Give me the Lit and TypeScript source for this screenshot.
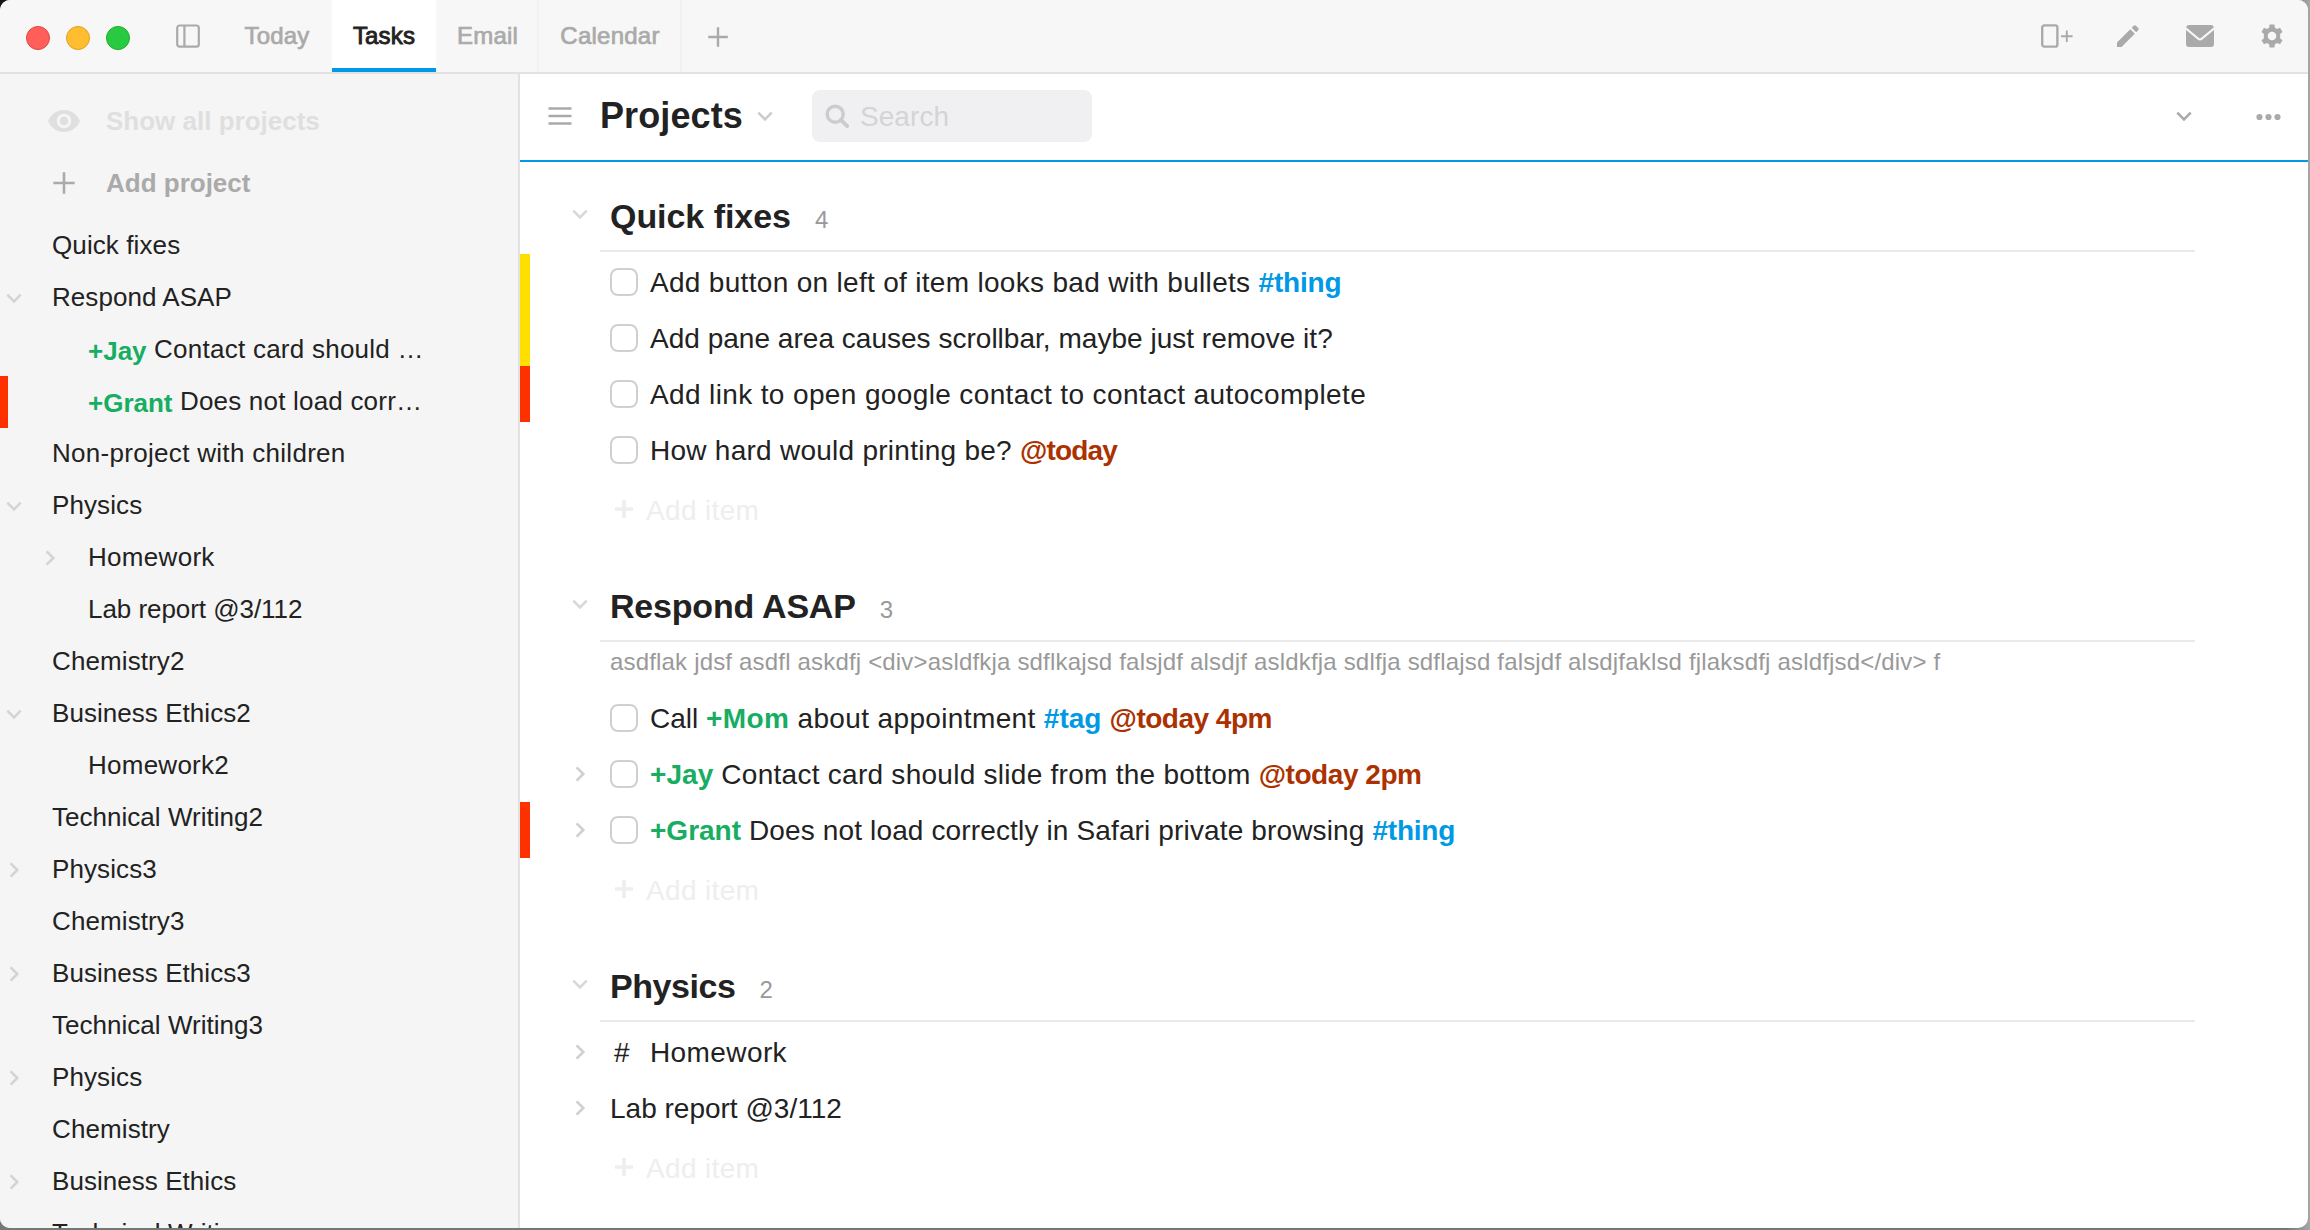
import { LitElement, html, css, svg, nothing, type TemplateResult } from "lit";
import { customElement, property } from "lit/decorators.js";
import { classMap } from "lit/directives/class-map.js";

type Fold = "open" | "closed" | "none";
type Mark = "yellow" | "red" | "none";
type Kind = "plain" | "person" | "tag" | "due";
// kind, text, tracking in px
type Span = [Kind, string, number];

interface NavRow {
  spans: Span[];
  fold?: Fold;
  nested?: boolean;
  mark?: Mark;
}

interface Item {
  spans: Span[];
  fold?: Fold;
  mark?: Mark;
  lead: "box" | "hash" | "none";
}

interface Section {
  title: string;
  tracking: number;
  count: number;
  note?: string;
  items: Item[];
}

const plain = (text: string, tracking = 0.1): Span[] => [["plain", text, tracking]];

const NAV: NavRow[] = [
  { spans: plain("Quick fixes") },
  { spans: plain("Respond ASAP", 0.05), fold: "open" },
  { spans: [["person", "+Jay", 0], ["plain", " Contact card should …", 0.25]], nested: true },
  { spans: [["person", "+Grant", 0], ["plain", " Does not load corr…", 0.2]], nested: true, mark: "red" },
  { spans: plain("Non-project with children", 0.3) },
  { spans: plain("Physics"), fold: "open" },
  { spans: plain("Homework", 0.3), fold: "closed", nested: true },
  { spans: plain("Lab report @3/112", -0.05), nested: true },
  { spans: plain("Chemistry2") },
  { spans: plain("Business Ethics2", 0.05), fold: "open" },
  { spans: plain("Homework2", 0.25), nested: true },
  { spans: plain("Technical Writing2", 0.03) },
  { spans: plain("Physics3"), fold: "closed" },
  { spans: plain("Chemistry3") },
  { spans: plain("Business Ethics3", 0.05), fold: "closed" },
  { spans: plain("Technical Writing3", 0.03) },
  { spans: plain("Physics"), fold: "closed" },
  { spans: plain("Chemistry") },
  { spans: plain("Business Ethics", 0.05), fold: "closed" },
  { spans: plain("Technical Writing", 0.03) },
];

const SECTIONS: Section[] = [
  {
    title: "Quick fixes",
    tracking: -0.05,
    count: 4,
    items: [
      { lead: "box", mark: "yellow", spans: [["plain", "Add button on left of item looks bad with bullets ", 0.31], ["tag", "#thing", -0.2]] },
      { lead: "box", mark: "yellow", spans: plain("Add pane area causes scrollbar, maybe just remove it?", 0.02) },
      { lead: "box", mark: "red", spans: plain("Add link to open google contact to contact autocomplete", 0.37) },
      { lead: "box", spans: [["plain", "How hard would printing be? ", 0.26], ["due", "@today", -0.8]] },
    ],
  },
  {
    title: "Respond ASAP",
    tracking: -0.2,
    count: 3,
    note: "asdflak jdsf asdfl askdfj <div>asldfkja sdflkajsd falsjdf alsdjf asldkfja sdlfja sdflajsd falsjdf alsdjfaklsd fjlaksdfj asldfjsd</div> f",
    items: [
      {
        lead: "box",
        spans: [
          ["plain", "Call ", 0],
          ["person", "+Mom", 0.4],
          ["plain", " about appointment ", 0.37],
          ["tag", "#tag", 0],
          ["plain", " ", 0.4],
          ["due", "@today 4pm", -0.5],
        ],
      },
      {
        lead: "box",
        fold: "closed",
        spans: [["person", "+Jay", 0.05], ["plain", " Contact card should slide from the bottom ", 0.27], ["due", "@today 2pm", -0.45]],
      },
      {
        lead: "box",
        fold: "closed",
        mark: "red",
        spans: [["person", "+Grant", 0], ["plain", " Does not load correctly in Safari private browsing ", 0.14], ["tag", "#thing", -0.2]],
      },
    ],
  },
  {
    title: "Physics",
    tracking: -0.45,
    count: 2,
    items: [
      { lead: "hash", fold: "closed", spans: plain("Homework", 0.4) },
      { lead: "none", fold: "closed", spans: plain("Lab report @3/112", 0) },
    ],
  },
];

const SHAPES: Record<string, TemplateResult> = {
  down: svg`<path d="M5.3 8.6L12 15.3l6.7-6.7" fill="none" stroke="currentColor" stroke-width="2.6"/>`,
  right: svg`<path d="M8.6 5.3L15.3 12l-6.7 6.7" fill="none" stroke="currentColor" stroke-width="2.6"/>`,
  plus: svg`<path d="M12 1.3v21.4M1.3 12h21.4" fill="none" stroke="currentColor" stroke-width="2.6"/>`,
  boldPlus: svg`<path d="M12 3v18M3 12h18" fill="none" stroke="currentColor" stroke-width="3.6"/>`,
  panes: svg`<rect x="1.2" y="1.5" width="21.6" height="21.2" rx="2.4" fill="none" stroke="currentColor" stroke-width="2.2"/><path d="M8.4 2v20.4" stroke="currentColor" stroke-width="2.2"/>`,
  eye: svg`<path fill-rule="evenodd" fill="currentColor" d="M16 1C8.8 1 2.7 5.500 0 12c2.700 6.500 8.800 11 16 11s13.300-4.500 16-11C29.300 5.500 23.200 1 16 1zM16 19.300a7.300 7.300 0 1 1 0-14.600 7.300 7.300 0 0 1 0 14.600zM16 7.600a4.400 4.400 0 1 0 0 8.800 4.400 4.400 0 0 0 0-8.800z"/>`,
  menu: svg`<path d="M.5 4.500h23M.5 12h23M.5 19.500h23" fill="none" stroke="currentColor" stroke-width="2.600"/>`,
  search: svg`<circle cx="10.200" cy="10.200" r="8" fill="none" stroke="currentColor" stroke-width="3.400"/><path d="M15.800 15.800l6.400 6.400" stroke="currentColor" stroke-width="3.800" stroke-linecap="round"/>`,
  addPane: svg`<rect x="1.200" y="1.400" width="15.200" height="21.200" rx="2.200" fill="none" stroke="currentColor" stroke-width="2.400"/><path d="M20 12.300h11.600M25.800 6.500v11.600" stroke="currentColor" stroke-width="1.900" fill="none"/>`,
  pencil: svg`<path fill="currentColor" d="M1 23v-4.500L14.300 5.200l4.500 4.500L5.500 23zM15.700 3.800l2-2a1.600 1.600 0 0 1 2.300 0l2.200 2.200a1.600 1.600 0 0 1 0 2.300l-2 2z"/>`,
  mail: svg`<path fill="currentColor" d="M3 1h22a3 3 0 0 1 2.900 2.200L15.200 13.800a2 2 0 0 1-2.500 0L.1 3.200A3 3 0 0 1 3 1zM0 6l11.600 9.600a3.700 3.700 0 0 0 4.800 0L28 6v14a3 3 0 0 1-3 3H3a3 3 0 0 1-3-3z"/>`,
  gear: svg`<path fill="currentColor" fill-rule="evenodd" d="M9.600.5h4.800l.5 3.200a8.800 8.800 0 0 1 2.100 1.200l3-1.200 2.500 4.200-2.500 2a9 9 0 0 1 0 4.300l2.500 2-2.500 4.100-3-1.200a8.800 8.800 0 0 1-2.100 1.200l-.5 3.200H9.600l-.5-3.200A8.800 8.800 0 0 1 7 19.100l-3 1.200-2.500-4.100 2.500-2a9 9 0 0 1 0-4.300l-2.500-2L4 3.700l3 1.200a8.800 8.800 0 0 1 2.100-1.200zM12 7.700a4.300 4.300 0 1 0 0 8.600 4.300 4.300 0 0 0 0-8.600z"/>`,
  dots: svg`<circle cx="3.500" cy="12" r="3.100" fill="currentColor"/><circle cx="12.500" cy="12" r="3.100" fill="currentColor"/><circle cx="21.500" cy="12" r="3.100" fill="currentColor"/>`,
};

const icon = (name: string, width = 24) =>
  html`<svg class="icon" width=${width} height="24" viewBox="0 0 ${width} 24" aria-hidden="true">${SHAPES[name]}</svg>`;

const foldIcon = (fold: Fold = "none") => (fold === "none" ? nothing : icon(fold === "open" ? "down" : "right"));

const rich = (spans: Span[]) =>
  spans.map(([kind, text, tracking]) => html`<span class=${kind} style="letter-spacing:${tracking}px">${text}</span>`);

const shared = css`
  * {
    box-sizing: border-box;
  }
  .icon {
    display: block;
    flex: none;
  }
  .plain {
    white-space: pre;
  }
  .person,
  .tag,
  .due {
    font-weight: 700;
    white-space: pre;
  }
  .person {
    color: #17ad62;
  }
  .tag {
    color: #0099e5;
  }
  .due {
    color: #ab3200;
  }
  .bar-yellow {
    background: #ffdf00;
  }
  .bar-red {
    background: #ff3000;
  }
`;

@customElement("window-bar")
export class WindowBar extends LitElement {
  static styles = [
    shared,
    css`
      :host {
        display: flex;
        height: 74px;
        flex: none;
        background: #f7f7f7;
        border-bottom: 2px solid #e2e2e2;
        color: #aaa;
      }
      .lights {
        display: flex;
        gap: 16px;
        align-items: center;
        padding: 4px 0 0 26px;
      }
      .light {
        width: 24px;
        height: 24px;
        border-radius: 50%;
        border: 1px solid;
      }
      .close {
        background: #ff5f58;
        border-color: #e2463f;
      }
      .min {
        background: #ffbe2f;
        border-color: #dfa023;
      }
      .max {
        background: #28ca41;
        border-color: #1dad2b;
      }
      .panes {
        display: flex;
        align-items: center;
        padding-left: 46px;
        margin-right: 30px;
      }
      .tab {
        display: flex;
        justify-content: center;
        font-size: 24px;
        line-height: 72px;
        letter-spacing: 0.15px;
        -webkit-text-stroke: 0.7px currentColor;
        border-right: 2px solid #f1f1f1;
      }
      .today {
        width: 102px;
        border-right: 0;
        padding-right: 8px;
      }
      .tasks {
        width: 104px;
        color: #222;
        background: #fff;
        border-right: 0;
        border-bottom: 4px solid #0099e5;
        -webkit-text-stroke-width: 0.9px;
      }
      .email {
        width: 103px;
        padding-left: 2px;
      }
      .calendar {
        width: 143px;
        padding-left: 1px;
        letter-spacing: 0.25px;
      }
      .new {
        display: flex;
        align-items: center;
        padding: 1px 0 0 25px;
      }
      .new .icon {
        width: 22px;
        height: 22px;
      }
      .tools {
        display: flex;
        align-items: center;
        margin-left: auto;
        padding-right: 24px;
      }
      .tools .icon + .icon {
        margin-left: 43px;
      }
      .tools .icon:nth-child(3),
      .tools .icon:nth-child(4) {
        margin-left: 46px;
      }
    `,
  ];

  render() {
    return html`
      <div class="lights">
        <span class="light close"></span><span class="light min"></span><span class="light max"></span>
      </div>
      <div class="panes">${icon("panes")}</div>
      <div class="tab today">Today</div>
      <div class="tab tasks">Tasks</div>
      <div class="tab email">Email</div>
      <div class="tab calendar">Calendar</div>
      <div class="new">${icon("plus")}</div>
      <div class="tools">${icon("addPane", 32)}${icon("pencil")}${icon("mail", 28)}${icon("gear")}</div>
    `;
  }
}

@customElement("project-nav")
export class ProjectNav extends LitElement {
  static styles = [
    shared,
    css`
      :host {
        display: block;
        width: 520px;
        flex: none;
        overflow: hidden;
        background: #f5f5f5;
        border-right: 2px solid #e2e2e2;
        padding-top: 16px;
        font-size: 26px;
      }
      .action {
        display: grid;
        grid-template-columns: 106px 1fr;
        align-items: center;
        height: 62px;
        font-weight: 700;
      }
      .action .icon {
        justify-self: end;
        margin-right: 30px;
      }
      .show {
        color: #dfdfdf;
      }
      .show .icon {
        margin-right: 26px;
      }
      .add {
        color: #aaa;
      }
      .rows {
        margin-top: 6px;
      }
      .row {
        display: grid;
        grid-template-columns: 8px 44px 1fr;
        height: 52px;
        line-height: 50px;
      }
      .nested {
        grid-template-columns: 8px 80px 1fr;
      }
      .fold {
        color: #d4d4d4;
        margin-left: -6px;
        padding-top: 14px;
      }
      .nested .fold {
        margin-left: 30px;
      }
      .text {
        white-space: nowrap;
      }
      .person {
        position: relative;
        top: 2px;
      }
    `,
  ];

  render() {
    return html`
      <div class="action show">${icon("eye", 32)}<span>Show all projects</span></div>
      <div class="action add">${icon("plus")}<span>Add project</span></div>
      <div class="rows">
        ${NAV.map(
          (row) => html`<div class=${classMap({ row: true, nested: !!row.nested })}>
            <span class="bar-${row.mark ?? "none"}"></span>
            <span class="fold">${foldIcon(row.fold)}</span>
            <span class="text">${rich(row.spans)}</span>
          </div>`,
        )}
      </div>
    `;
  }
}

@customElement("project-section")
export class ProjectSection extends LitElement {
  @property({ attribute: false }) section!: Section;

  static styles = [
    shared,
    css`
      :host {
        display: block;
        font-size: 28px;
      }
      .head {
        display: flex;
        height: 90px;
        align-items: flex-end;
      }
      .head-fold {
        height: 90px;
        width: 80px;
        padding: 40px 0 0 48px;
        color: #d8d8d8;
      }
      .title {
        display: flex;
        align-items: baseline;
        flex: 1;
        margin-right: 113px;
        padding-left: 10px;
        border-bottom: 2px solid #eaeaea;
        line-height: 60px;
      }
      .name {
        font-size: 34px;
        font-weight: 700;
        margin: 0;
      }
      .count {
        font-size: 24px;
        color: #999;
        margin-left: 24px;
      }
      .note {
        margin: 0;
        padding: 2px 0 10px 90px;
        height: 48px;
        line-height: 36px;
        font-size: 24px;
        color: #999;
        letter-spacing: 0.18px;
        white-space: nowrap;
      }
      .items {
        padding-top: 2px;
      }
      .note + .items {
        padding-top: 0;
      }
      .item {
        display: grid;
        grid-template: 56px / 10px 80px auto 1fr;
        line-height: 58px;
      }
      .fold {
        padding: 16px 0 0 38px;
        color: #d0d0d0;
      }
      .box {
        width: 28px;
        height: 28px;
        margin: 14px 12px 0 0;
        border: 2px solid #d0d0d0;
        border-radius: 8px;
        background: #fff;
      }
      .hash {
        width: 40px;
        padding-left: 4px;
      }
      .text {
        white-space: nowrap;
      }
      .new {
        display: flex;
        height: 74px;
        padding-left: 92px;
        color: #eee;
        line-height: 66px;
        letter-spacing: 0.35px;
      }
      .new .icon {
        margin: 19px 10px 0 0;
      }
    `,
  ];

  private lead(kind: Item["lead"]) {
    if (kind === "box") return html`<span class="box"></span>`;
    if (kind === "hash") return html`<span class="hash">#</span>`;
    return html`<span></span>`;
  }

  render() {
    const s = this.section;
    return html`
      <div class="head">
        <span class="head-fold">${icon("down")}</span>
        <div class="title">
          <h2 class="name" style="letter-spacing:${s.tracking}px">${s.title}</h2>
          <span class="count">${s.count}</span>
        </div>
      </div>
      ${s.note ? html`<p class="note">${s.note}</p>` : nothing}
      <div class="items">
        ${s.items.map(
          (item) => html`<div class="item">
            <span class="bar-${item.mark ?? "none"}"></span>
            <span class="fold">${foldIcon(item.fold)}</span>
            ${this.lead(item.lead)}
            <span class="text">${rich(item.spans)}</span>
          </div>`,
        )}
      </div>
      <div class="new">${icon("boldPlus")}<span>Add item</span></div>
    `;
  }
}

@customElement("app-root")
export class AppRoot extends LitElement {
  static styles = [
    shared,
    css`
      :host {
        display: block;
        width: 2310px;
        height: 1230px;
        overflow: hidden;
        padding: 0 2px 2px 0;
        box-sizing: border-box;
        background: linear-gradient(135deg, #15151d 8px, transparent 8px), linear-gradient(90deg, #777 99%, #a6a6a6);
        font-family: "Liberation Sans", Arial, sans-serif;
        color: #222;
      }
      .window {
        display: flex;
        flex-direction: column;
        height: 1228px;
        border-radius: 10px;
        overflow: hidden;
        background: #fff;
      }
      .body {
        display: flex;
        flex: 1;
        min-height: 0;
      }
      .main {
        flex: 1;
        min-width: 0;
        overflow: hidden;
      }
      .header {
        display: flex;
        align-items: center;
        height: 88px;
        padding: 0 27px 2px 28px;
        border-bottom: 2px solid #0099e5;
        color: #aaa;
      }
      .heading {
        margin: 0 10px 0 28px;
        font-size: 36px;
        line-height: 50px;
        letter-spacing: 0.1px;
        color: #222;
      }
      .pick {
        color: #ccc;
      }
      .search {
        display: flex;
        align-items: center;
        width: 280px;
        height: 52px;
        margin-left: 35px;
        padding-left: 13px;
        border-radius: 8px;
        background: #f0f0f2;
        color: #ccc;
      }
      .hint {
        margin-left: 11px;
        padding-top: 2px;
        font-size: 28px;
        letter-spacing: 0.1px;
        color: #d4d4d4;
      }
      .collapse {
        margin: 0 60px 0 auto;
      }
      .more {
        padding-top: 2px;
      }
    `,
  ];

  render() {
    return html`
      <div class="window">
        <window-bar></window-bar>
        <div class="body">
          <project-nav></project-nav>
          <main class="main">
            <header class="header">
              ${icon("menu")}
              <h1 class="heading">Projects</h1>
              <span class="pick">${icon("down")}</span>
              <div class="search">${icon("search")}<span class="hint">Search</span></div>
              <span class="collapse">${icon("down")}</span>
              <span class="more">${icon("dots", 25)}</span>
            </header>
            ${SECTIONS.map((s) => html`<project-section .section=${s}></project-section>`)}
          </main>
        </div>
      </div>
    `;
  }
}
